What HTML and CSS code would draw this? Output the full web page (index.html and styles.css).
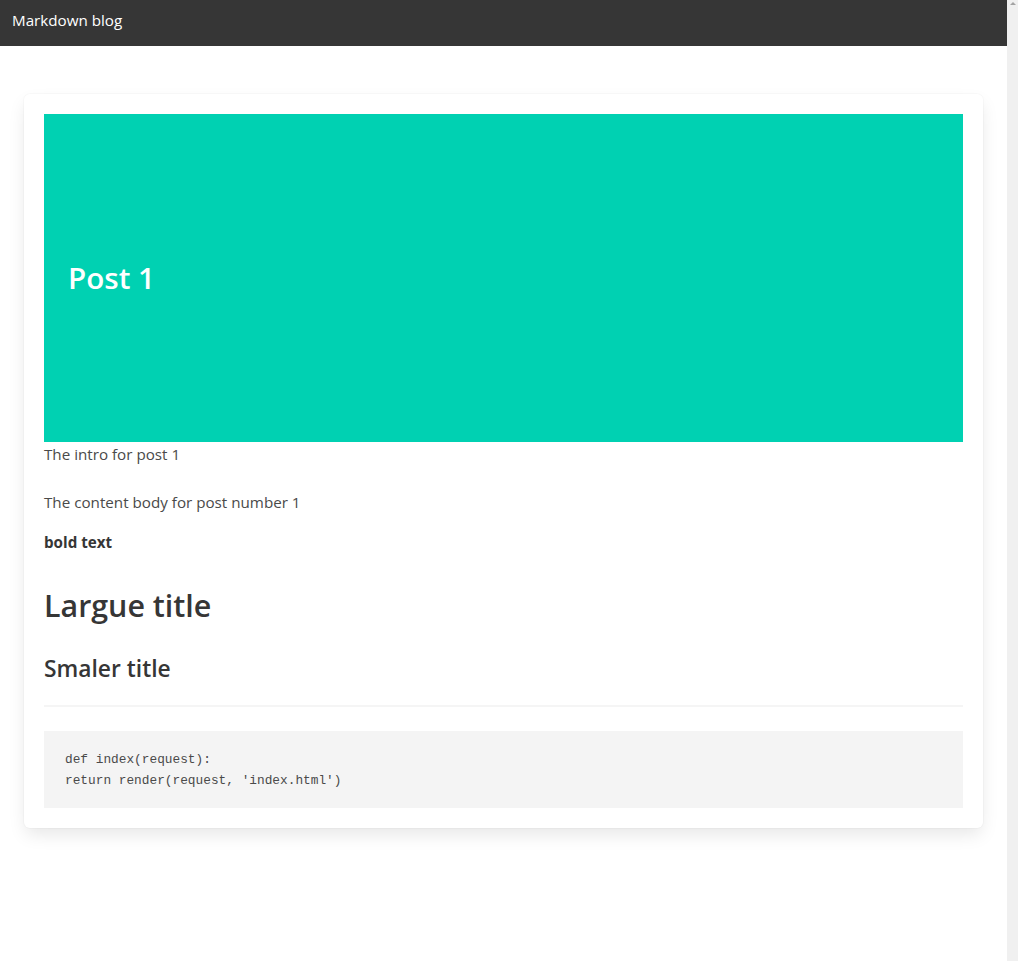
FILE: index.html
```html
<!DOCTYPE html>
<html lang="en">
<head>
<meta charset="utf-8">
<title>Markdown blog</title>
<link rel="stylesheet" href="styles.css">
</head>
<body>
<div class="page">
  <nav class="navbar">
    <a class="navbar-item" href="#">Markdown blog</a>
  </nav>
  <section class="section">
    <article class="box">
      <div class="hero">
        <h1 class="hero-title">Post 1</h1>
      </div>
      <p class="intro">The intro for post 1</p>
      <div class="content">
        <p>The content body for post number 1</p>
        <p class="bold-line"><strong>bold text</strong></p>
        <h1>Largue title</h1>
        <h3>Smaler title</h3>
        <hr>
        <pre><code>def index(request):
return render(request, 'index.html')</code></pre>
      </div>
    </article>
  </section>
</div>
<div class="scrollbar"><span class="scroll-arrow"></span></div>
</body>
</html>
```
FILE: styles.css
```css
html, body {
  margin: 0;
  padding: 0;
  height: 100%;
}
body {
  display: flex;
  font-family: "Open Sans", "Noto Sans", sans-serif;
  font-size: 15.2px;
  line-height: 24px;
  color: #4a4a4a;
  background: #fff;
}
.page {
  flex: 1;
  min-width: 0;
}
.scrollbar {
  width: 11px;
  background: #f0f0f0;
  display: flex;
  justify-content: center;
  padding-top: 2px;
  box-sizing: border-box;
}
.scroll-arrow {
  width: 0;
  height: 0;
  border-left: 3px solid transparent;
  border-right: 3px solid transparent;
  border-bottom: 3px solid #a3a3a3;
}
.navbar {
  height: 46px;
  background: #363636;
  display: flex;
  align-items: flex-start;
}
.navbar-item {
  display: block;
  padding: 8px 12px;
  color: #ffffff;
  text-decoration: none;
  line-height: 24px;
  font-size: 15.2px;
}
.section {
  padding: 48px 24px;
}
.box {
  background: #fff;
  border-radius: 6px;
  box-shadow: 0 8px 18px -2px rgba(10,10,10,0.1), 0 0 0 1px rgba(10,10,10,0.02);
  padding: 20px;
}
.hero {
  height: 328px;
  background: #00d1b2;
  display: flex;
  align-items: center;
  padding: 0 24px;
}
.hero-title {
  margin: 0;
  color: #fff;
  font-size: 29.6px;
  font-weight: 600;
  line-height: 36px;
}
.intro {
  margin: 0 0 24px;
}
.content p {
  margin: 0 0 16px;
}
.content .bold-line {
  margin-bottom: 0;
}
.content strong {
  color: #363636;
  font-weight: 700;
}
.content h1,
.content h3 {
  color: #363636;
  font-weight: 600;
}
.content h1 {
  font-size: 30.4px;
  line-height: 36px;
  margin: 34px 0 0;
}
.content h3 {
  font-size: 22.8px;
  line-height: 27px;
  margin: 31px 0 0;
}
.content hr {
  border: none;
  height: 2px;
  background: #f5f5f5;
  margin: 23px 0 24px;
}
.content pre {
  margin: 0;
  background: #f4f4f4;
  padding: 18px 21px 17px;
  font-family: "Liberation Mono", "DejaVu Sans Mono", monospace;
  font-size: 12.8px;
  line-height: 21px;
  color: #4a4a4a;
  white-space: pre;
}
.content pre code {
  display: block;
  font-family: inherit;
  font-size: inherit;
  line-height: 21px;
}
```
